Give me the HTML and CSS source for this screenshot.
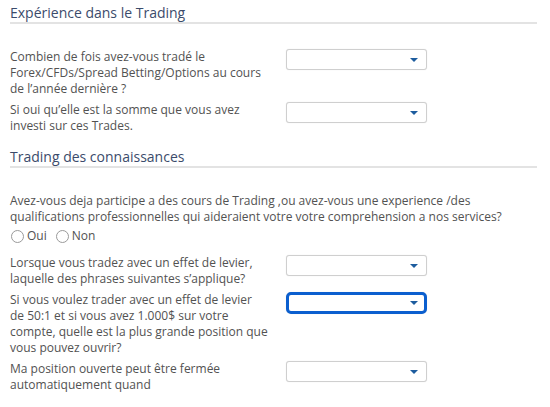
FILE: index.html
```html
<!DOCTYPE html>
<html lang="fr">
<head>
<meta charset="utf-8">
<link rel="stylesheet" href="styles.css">
</head>
<body>
<div class="form">
  <section class="section">
    <h2 class="section-title">Expérience dans le Trading</h2>
    <div class="rows">
      <div class="row">
        <label class="label">Combien de fois avez-vous tradé le Forex/CFDs/Spread Betting/Options au cours de l’année dernière ?</label>
        <div class="select"><span class="arrow"></span></div>
      </div>
      <div class="row">
        <label class="label">Si oui qu’elle est la somme que vous avez investi sur ces Trades.</label>
        <div class="select"><span class="arrow"></span></div>
      </div>
    </div>
  </section>
  <section class="section">
    <h2 class="section-title">Trading des connaissances</h2>
    <div class="rows">
      <div class="question">
        <p class="question-text">Avez-vous deja participe a des cours de Trading ,ou avez-vous une experience /des qualifications professionnelles qui aideraient votre votre comprehension a nos services?</p>
        <div class="radios">
          <span class="radio"><span class="circle"></span>Oui</span>
          <span class="radio"><span class="circle"></span>Non</span>
        </div>
      </div>
      <div class="row">
        <label class="label">Lorsque vous tradez avec un effet de levier, laquelle des phrases suivantes s’applique?</label>
        <div class="select"><span class="arrow"></span></div>
      </div>
      <div class="row">
        <label class="label">Si vous voulez trader avec un effet de levier de 50:1 et si vous avez 1.000$ sur votre compte, quelle est la plus grande position que vous pouvez ouvrir?</label>
        <div class="select focused"><span class="arrow"></span></div>
      </div>
      <div class="row">
        <label class="label">Ma position ouverte peut être fermée automatiquement quand</label>
        <div class="select"><span class="arrow"></span></div>
      </div>
    </div>
  </section>
</div>
</body>
</html>
```

FILE: styles.css
```css
* { box-sizing: border-box; }
html, body { margin: 0; padding: 0; background: #fff; }
body {
  font-family: "Open Sans", "Liberation Sans", sans-serif;
  font-size: 12px;
  line-height: 16px;
  color: #525252;
}
.form {
  width: 527px;
  margin-left: 10px;
  padding-top: 3px;
}
.section { margin-bottom: 13px; }
.section-title {
  margin: 0;
  font-size: 14px;
  font-weight: 400;
  line-height: 19px;
  color: #3b4b6b;
  border-bottom: 2px solid #e3e3e3;
}
.rows {
  display: flex;
  flex-direction: column;
  gap: 5px;
  padding-top: 25px;
}
.row {
  display: grid;
  grid-template-columns: 259px 141px;
  column-gap: 17px;
  align-items: start;
}
.label { display: block; }
.select {
  position: relative;
  height: 21px;
  border: 1px solid #cfcfcf;
  border-radius: 3px;
  box-shadow: 0 0 1px rgba(0,0,0,0.15);
  background: #fff;
}
.select.focused {
  border: 3px solid #0b5fcf;
  border-radius: 5px;
  height: 22px;
}
.arrow {
  position: absolute;
  right: 8px;
  top: 8px;
  width: 0;
  height: 0;
  border-left: 4px solid transparent;
  border-right: 4px solid transparent;
  border-top: 4px solid #1d5c9e;
}
.select.focused .arrow { right: 6px; top: 6px; }
.question-text { margin: 0; }
.radios {
  display: flex;
  gap: 8px;
  margin-top: 3px;
  margin-bottom: 6px;
}
.radio {
  display: inline-flex;
  align-items: center;
  gap: 3px;
}
.circle {
  width: 13px;
  height: 13px;
  border: 1px solid #9a9a9a;
  border-radius: 50%;
  margin-left: 1px;
}
```
